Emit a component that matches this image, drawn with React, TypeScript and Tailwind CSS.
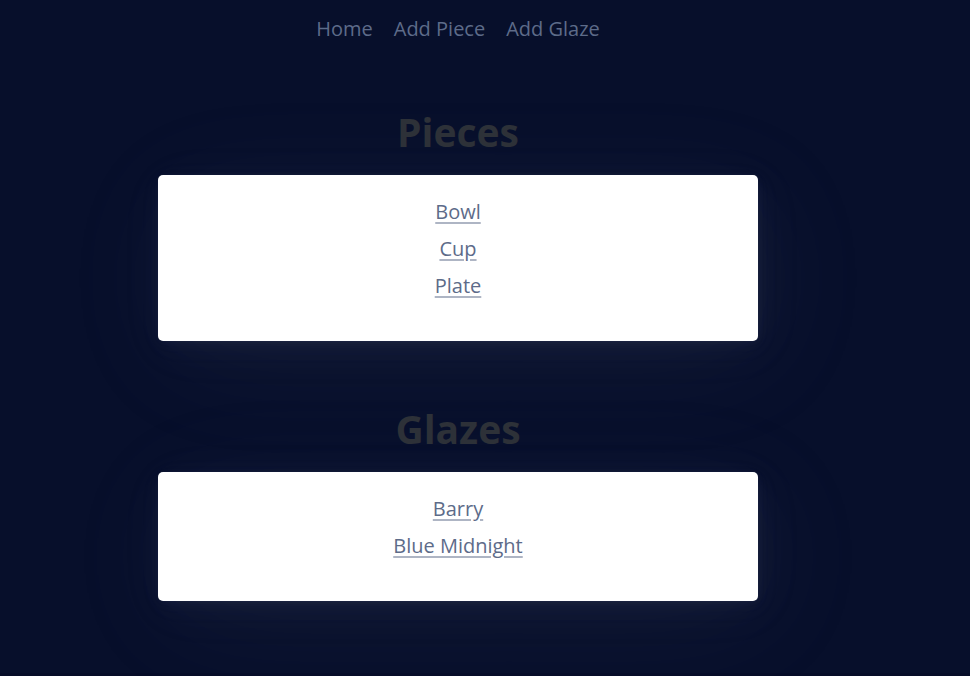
const navLinks = ["Home", "Add Piece", "Add Glaze"];

const cardShadow =
  "shadow-[0px_1px_3px_rgba(170,170,190,0.02),1px_1px_8px_rgba(170,170,190,0.03),1px_3px_15px_rgba(170,170,190,0.035),2px_5px_27px_rgba(170,170,190,0.045),4px_8px_50px_rgba(170,170,190,0.05),10px_20px_120px_rgba(170,170,190,0.07),0px_0px_0px_1px_rgba(170,170,190,0.015)]";

function Section({ title, items }: { title: string; items: string[] }) {
  return (
    <section>
      <h2 className="text-center text-[39px] font-bold leading-[46px] text-[#2d3138]">{title}</h2>
      <ul
        className={`mt-5 flex flex-col items-center gap-[7px] rounded-[5px] bg-white px-5 pt-[22px] pb-10 ${cardShadow}`}
      >
        {items.map((item) => (
          <li key={item}>
            <a
              href="#"
              className="text-[#5d6b89] underline decoration-[#aeb5c4] decoration-2 underline-offset-[3px]"
            >
              {item}
            </a>
          </li>
        ))}
      </ul>
    </section>
  );
}

export default function App() {
  return (
    <div className="min-h-screen border-b-[3px] border-[#060c28] bg-[#070f2b] pr-[54px] font-['Open_Sans','Noto_Sans',sans-serif] text-[20px] leading-[30px]">
      <nav className="flex justify-center gap-[21px] pt-[14px]">
        {navLinks.map((label) => (
          <a key={label} href="#" className="text-[#5d6b89]">
            {label}
          </a>
        ))}
      </nav>
      <main className="mx-auto flex max-w-[600px] flex-col gap-[65px] pt-[65px]">
        <Section title="Pieces" items={["Bowl", "Cup", "Plate"]} />
        <Section title="Glazes" items={["Barry", "Blue Midnight"]} />
      </main>
    </div>
  );
}
